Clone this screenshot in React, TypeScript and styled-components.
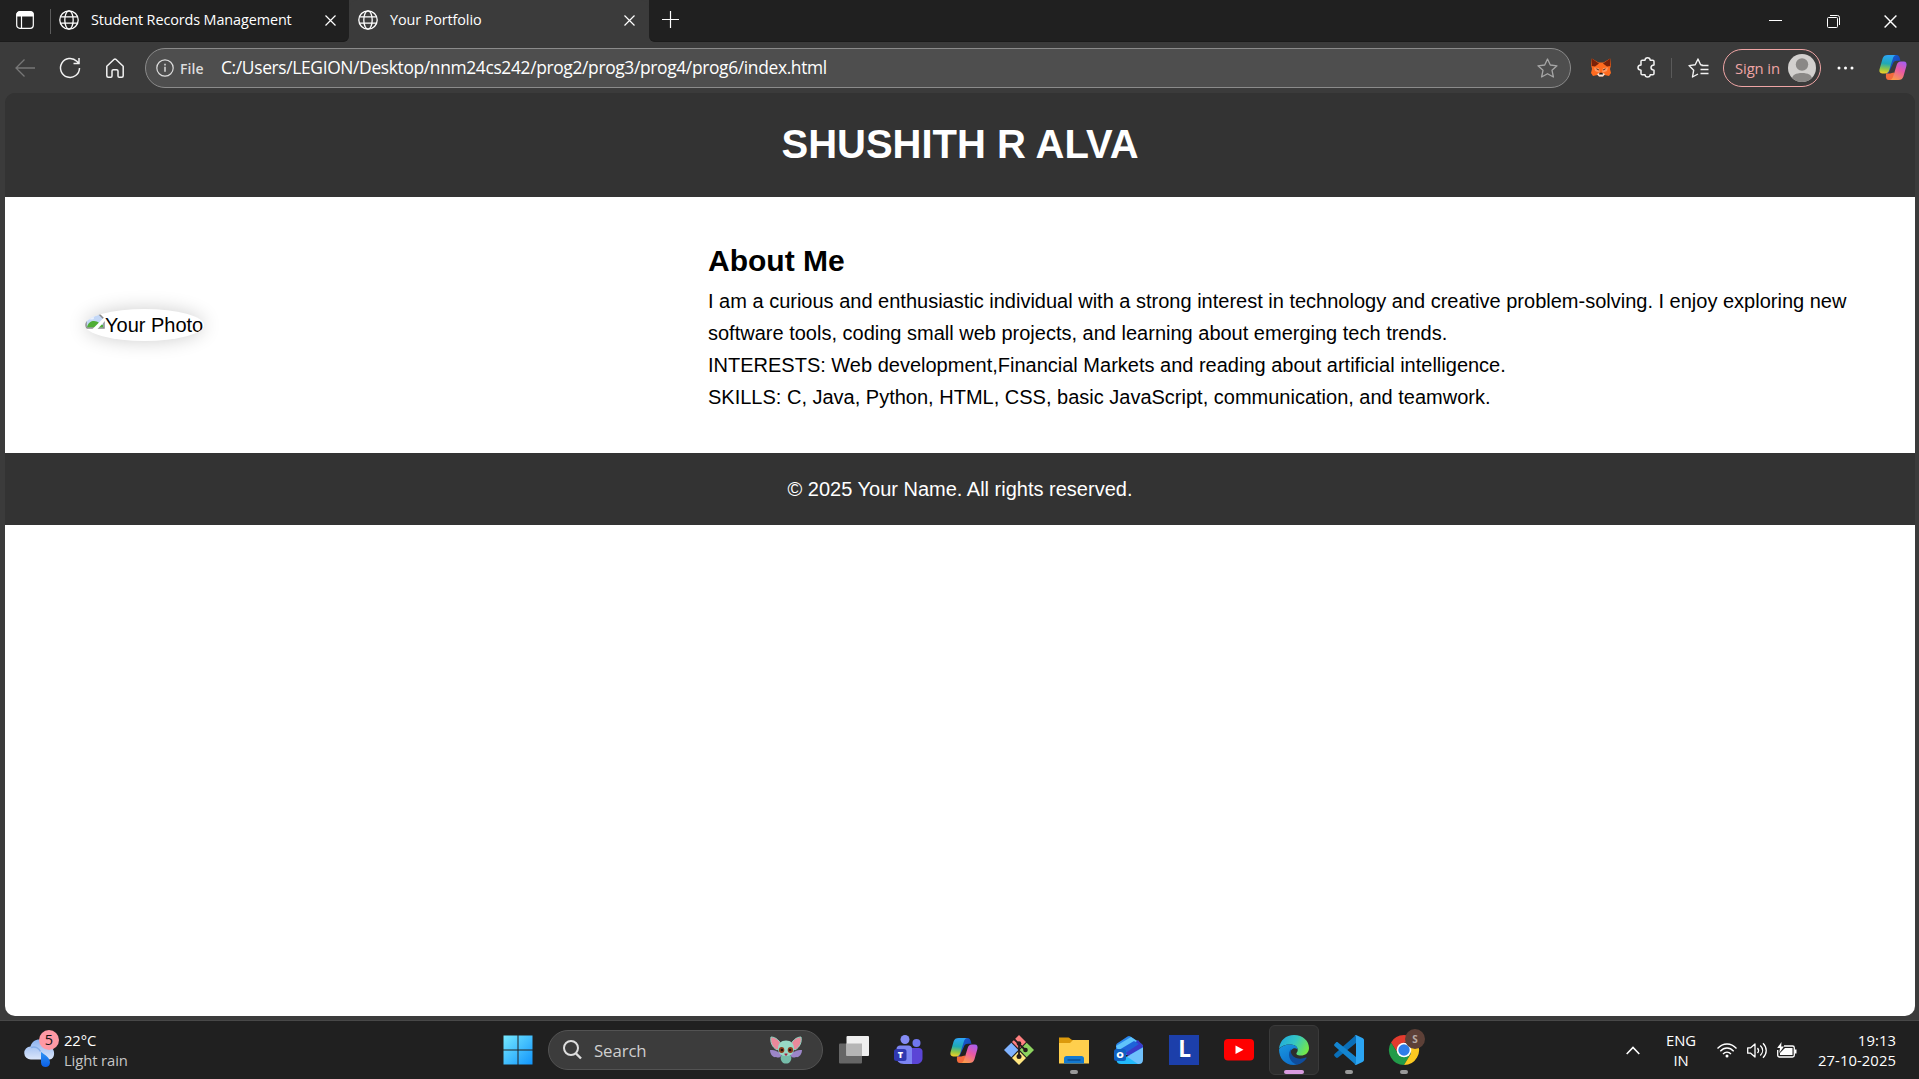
import React from "react";
import styled, { createGlobalStyle } from "styled-components";

const Global = createGlobalStyle`
  * { box-sizing: border-box; }
  html, body { margin: 0; padding: 0; overflow: hidden; background: #202020; }
  svg { display: block; flex: none; overflow: visible; }
`;

const ui = `"Segoe UI", "Open Sans", "Noto Sans", sans-serif`;
const arial = `Arial, "Liberation Sans", sans-serif`;

const Desktop = styled.div`
  width: 1919px;
  height: 1079px;
  display: flex;
  flex-direction: column;
  font-family: ${ui};
  color: #fff;
`;

const Browser = styled.div`
  height: 1021px;
  display: flex;
  flex-direction: column;
  background: #3b3b3b;
  border-bottom: 1px solid #484848;
`;

const TabStrip = styled.div`
  height: 42px;
  flex: none;
  display: flex;
  background: #3b3b3b;
`;

const StripSection = styled.div<{ $w?: number; $side: "left" | "right" }>`
  ${(p) => (p.$w ? `width: ${p.$w}px;` : "flex: 1;")}
  display: flex;
  align-items: flex-start;
  background: #202020;
  border-bottom: 1px solid #1b1b1b;
  border-radius: ${(p) => (p.$side === "left" ? "0 0 6px 0" : "0 0 0 6px")};
`;

const Cell = styled.div<{ $w: number; $h?: number; $ml?: number }>`
  width: ${(p) => p.$w}px;
  height: ${(p) => (p.$h ? `${p.$h}px` : "100%")};
  margin-left: ${(p) => p.$ml ?? 0}px;
  flex: none;
  display: flex;
  align-items: center;
  justify-content: center;
`;

const StripRule = styled.div`
  width: 1px;
  height: 25px;
  margin-top: 9px;
  background: #5c5c5c;
`;

const ActiveTab = styled.div`
  width: 300px;
  height: 42px;
  display: flex;
  background: #3b3b3b;
  border-radius: 8px 8px 0 0;
`;

const TabTitle = styled.div<{ $w: number; $ml: number }>`
  width: ${(p) => p.$w}px;
  margin-left: ${(p) => p.$ml}px;
  height: 40px;
  line-height: 39px;
  font-size: 14.4px;
  letter-spacing: -0.1px;
  white-space: nowrap;
`;

const Spacer = styled.div`
  flex: 1;
`;

const Toolbar = styled.div`
  height: 51px;
  flex: none;
  display: flex;
  align-items: center;
  padding: 0 3px 0 2px;
`;

const AddressBar = styled.div`
  flex: 1;
  height: 40px;
  margin-left: 8px;
  margin-top: 1px;
  display: flex;
  align-items: center;
  border: 1px solid #8b8b8b;
  border-radius: 20px;
  background: #4e4e4e;
`;

const Scheme = styled.div`
  width: 41px;
  margin-left: -4px;
  font-size: 14px;
  font-weight: 600;
  letter-spacing: 0.1px;
  color: #dcdcdc;
`;

const Url = styled.div`
  flex: 1;
  font-size: 17.4px;
  letter-spacing: -0.345px;
  line-height: 36px;
  padding-bottom: 2px;
  white-space: nowrap;
`;

const ToolRule = styled.div`
  width: 1px;
  height: 20px;
  background: #5a5a5a;
`;

const SignIn = styled.div`
  width: 98px;
  height: 38px;
  margin-left: 7px;
  display: flex;
  align-items: center;
  justify-content: space-between;
  padding: 0 4px 0 11px;
  border: 1px solid #efa5a5;
  border-radius: 19px;
  color: #efa5a5;
  font-size: 14.8px;
  letter-spacing: -0.1px;
  white-space: nowrap;
`;

const Viewport = styled.main`
  height: 923px;
  margin: 0 4px 0 5px;
  background: linear-gradient(#333 100px, #fff 100px);
  border-radius: 10px;
  overflow: hidden;
  font-family: ${arial};
  font-size: 20px;
  line-height: 32px;
  color: #000;
`;

const Header = styled.header`
  height: 104px;
  padding: 20px;
  background: #333;
  color: #fff;
  text-align: center;
`;

const Name = styled.h1`
  margin: 0;
  font-size: 40px;
  line-height: 63px;
`;

const About = styled.section`
  height: 256px;
  padding: 40px 60px 40px 80px;
  display: flex;
  align-items: center;
`;

const PhotoColumn = styled.div`
  width: 623px;
  flex: none;
`;

const Photo = styled.div`
  width: 119px;
  height: 32px;
  display: flex;
  align-items: flex-start;
  overflow: hidden;
  border-radius: 50%;
  box-shadow: 0 0 19px rgba(0, 0, 0, 0.2);
  white-space: nowrap;
`;

const Bio = styled.div`
  white-space: nowrap;
`;

const BioTitle = styled.h2`
  margin: 0;
  font-size: 30px;
  line-height: 48px;
`;

const Line = styled.p`
  margin: 0;
`;

const Footer = styled.footer`
  height: 72px;
  padding: 20px;
  background: #333;
  color: #fff;
  text-align: center;
`;

const Taskbar = styled.div`
  height: 58px;
  display: flex;
  align-items: center;
  background: #202020;
`;

const Weather = styled.div`
  width: 494px;
  height: 58px;
  padding-left: 24px;
  padding-bottom: 3px;
  display: flex;
  align-items: center;
`;

const Stack = styled.div<{ $align: string; $w?: number; $ls?: number }>`
  ${(p) => (p.$w ? `width: ${p.$w}px;` : "")}
  display: flex;
  flex-direction: column;
  text-align: ${(p) => p.$align};
  font-size: 14.8px;
  line-height: 20px;
  letter-spacing: ${(p) => p.$ls ?? -0.1}px;
  white-space: nowrap;
`;

const WeatherText = styled(Stack)`
  margin-left: 4px;
  margin-top: 3px;
`;

const Dim = styled.span`
  color: #c6c6c6;
`;

const Search = styled.div`
  width: 275px;
  height: 40px;
  margin: 0 3px 0 6px;
  padding: 0 19px 0 14px;
  display: flex;
  align-items: center;
  border: 1px solid #535353;
  border-radius: 20px;
  background: #3c3c3c;
  color: #cfcfcf;
  font-size: 16.8px;
`;

const SearchLabel = styled.span`
  flex: 1;
  margin-left: 12px;
  letter-spacing: -0.1px;
`;

const AppSlot = styled.div<{ $active?: boolean }>`
  width: 50px;
  height: 50px;
  margin: 0 2.5px;
  flex: none;
  display: flex;
  flex-direction: column;
  align-items: center;
  padding-top: 9px;
  border-radius: 6px;
  border: 1px solid ${(p) => (p.$active ? "#3a3a3a" : "transparent")};
  background: ${(p) => (p.$active ? "#2d2d2d" : "transparent")};
`;

const Indicator = styled.div<{ $active?: boolean }>`
  width: ${(p) => (p.$active ? 20 : 8)}px;
  height: 4px;
  margin-top: 5px;
  border-radius: 2px;
  background: ${(p) => (p.$active ? "#d99be0" : "#999")};
`;

const Tray = styled.div`
  display: flex;
  align-items: center;
  height: 58px;
  padding-right: 23px;
`;

const Globe = () => (
  <svg width="20" height="20" viewBox="0 0 20 20" fill="none" stroke="#fff" strokeWidth="1.3">
    <circle cx="10" cy="10" r="9.2" />
    <ellipse cx="10" cy="10" rx="4.2" ry="9.2" />
    <path d="M1.5 6.8h17M1.5 13.2h17" />
  </svg>
);

const Close = ({ s = 11 }: { s?: number }) => (
  <svg width={s} height={s} viewBox="0 0 11 11" stroke="#fff" strokeWidth="1.2">
    <path d="M.5.5l10 10M10.5.5l-10 10" />
  </svg>
);

const Copilot = ({ id }: { id: string }) => (
  <svg width="28" height="27" viewBox="0 0 28 27">
    <defs>
      <linearGradient id={id + "a"} x1="0.3" y1="0" x2="0.2" y2="1">
        <stop offset="0" stopColor="#2da5f5" />
        <stop offset=".45" stopColor="#1fa9b5" />
        <stop offset=".75" stopColor="#8fc646" />
        <stop offset="1" stopColor="#f5cf27" />
      </linearGradient>
      <linearGradient id={id + "b"} x1="0.8" y1="0" x2="0.3" y2="1">
        <stop offset="0" stopColor="#a75ef0" />
        <stop offset=".45" stopColor="#e858a6" />
        <stop offset="1" stopColor="#fb9a4b" />
      </linearGradient>
      <linearGradient id={id + "c"} x1="0" y1="0" x2="1" y2="1">
        <stop offset="0" stopColor="#1268d8" />
        <stop offset="1" stopColor="#1c35ad" />
      </linearGradient>
    </defs>
    <path d="M9 1h8.5c2 0 2.7 1.4 3.2 3l.8 2.7H18c-2.4 0-3.5 1-4.2 3.3L9 20c-2.2 0-2.8-1.800-3.200-3.500z" fill={`url(#${id}c)`} />
    <path d="M7 19.4h4.1l3.700-1 2.300 7.600H10c-2.4 0-2.6-1.1-3.1-3z" fill="#f36b3c" />
    <path d="M8.8 1H17c-2 .4-2.7 2-3.3 4l-3.4 11c-.7 2.2-1.8 3.4-4.2 3.4H3.3C.7 19.400 0 17.300.6 15l3-10.500C4.400 2 6 1 8.800 1z" fill={`url(#${id}a)`} />
    <path d="M19.200 26H11c2-.4 2.700-2 3.300-4l3.400-11c.7-2.200 1.800-3.400 4.200-3.400h2.800c2.600 0 3.300 2.100 2.700 4.400l-3 10.500c-.8 2.500-2.400 3.500-5.200 3.500z" fill={`url(#${id}b)`} />
  </svg>
);

const Fox = () => (
  <svg width="20" height="19" viewBox="0 0 20 19">
    <path d="M.8.500 7.500 4.500h5L19.200.500 20 7l-1 4 1 4-2 3-4.500-1-1.500 1.500H8L6.500 17 2 18l-2-3 1-4-1-4z" fill="#ff6b1f" />
    <path d="M.8.500 8 5.500 4 8.500.6 8zM19.200.500 12 5.500l4 3 3.400-.5z" fill="#7a2109" />
    <path d="M3 9.500 8 10l1 5-5-2zM17 9.500 12 10l-1 5 5-2z" fill="#ff9760" />
    <path d="M4.500 10.500 7.500 11l.3 1.500zM15.500 10.500 12.500 11l-.3 1.500z" fill="#35201a" />
    <path d="M6 16l2.500-1h3l2.500 1-2 2.500H8z" fill="#f3e6dd" />
    <path d="M8.500 14.800h3l.5 1.700H8z" fill="#2c1c18" />
  </svg>
);

const Avatar = () => (
  <svg width="28" height="28" viewBox="0 0 28 28">
    <defs>
      <clipPath id="av">
        <circle cx="14" cy="14" r="14" />
      </clipPath>
    </defs>
    <g clipPath="url(#av)">
      <path d="M0 0h28v28H0z" fill="#d2d0ce" />
      <circle cx="14" cy="10.500" r="6.200" fill="#8a8886" />
      <path d="M4 25c0-4 4-6 10-6s10 2 10 6l-3 4H7z" fill="#8a8886" />
    </g>
  </svg>
);

const BrokenImage = () => (
  <svg width="20" height="24" viewBox="0 0 20 24">
    <path d="M1 5h13l5 5v9H1z" fill="#c3d7f6" stroke="#8b8b8b" strokeWidth="1.500" />
    <path d="M2 18.300c1-4.500 4-6.300 7-6.300 4 0 6 3 9 4v2.300z" fill="#4fae36" />
    <ellipse cx="6" cy="9" rx="3" ry="1.500" fill="#e9f1fd" />
    <path d="M20.500 7v4.500L12 20.500H7z" fill="#fff" />
  </svg>
);

const WeatherIcon = () => (
  <svg width="36" height="40" viewBox="0 0 36 40">
    <defs>
      <linearGradient id="cl" x1="0" y1="0" x2="0" y2="1">
        <stop offset="0" stopColor="#8bb2f0" />
        <stop offset="1" stopColor="#dbe6fa" />
      </linearGradient>
      <linearGradient id="drop" x1="0" y1="0" x2="0" y2="1">
        <stop offset="0" stopColor="#2e94f4" />
        <stop offset="1" stopColor="#0b5fe8" />
      </linearGradient>
    </defs>
    <path d="M7 30.500a6.500 6.500 0 0 1-.5-13C8 12 13 9.500 18 11c5 0 7.500 3 8.500 7.500 5 1 5 12-1 12z" fill="url(#cl)" />
    <path d="M7 18.500c4-1.500 8 .500 9.500 4" stroke="#86aeea" strokeWidth="1.500" fill="none" />
    <path d="M17 23c4 3 9 5.500 9 10.500 0 6-9 6-9 0z" fill="url(#drop)" />
    <circle cx="25" cy="11" r="10" fill="#ff99a4" />
    <text x="25" y="16.200" textAnchor="middle" fontFamily="Open Sans" fontSize="14.500" fill="#111">5</text>
  </svg>
);

const Start = () => (
  <svg width="30" height="30" viewBox="0 0 30 30">
    <defs>
      <linearGradient id="win" gradientUnits="userSpaceOnUse" x1="0" y1="0" x2="30" y2="30">
        <stop offset="0" stopColor="#77eaff" />
        <stop offset="1" stopColor="#0f93fb" />
      </linearGradient>
    </defs>
    <path d="M.500.500h14v14H.500zM15.500.500h14v14h-14zM.500 15.500h14v14H.500zM15.500 15.500h14v14h-14z" fill="url(#win)" />
  </svg>
);

const Bat = () => (
  <svg width="34" height="28" viewBox="0 0 34 28">
    <path d="M1 14c6 0 9 2 12 5-2 3-4 3-6 2-3 1-6-3-6-7zM33 14c-6 0-9 2-12 5 2 3 4 3 6 2 3 1 6-3 6-7z" fill="#9c86c8" />
    <path d="M2 1c5 0 9 4 11 9l-5 4C3 11 1 6 2 1zM32 1c-5 0-9 4-11 9l5 4c5-3 7-8 6-13z" fill="#e9899b" stroke="#8fd3c0" strokeWidth="1" />
    <path d="M17 18c5 0 6 3 5 6s-3 3.500-5 3.500-4-.500-5-3.500 0-6 5-6z" fill="#76bca9" />
    <path d="M17 4.500c5 0 8 3 8 8 0 5-3 7.500-8 7.500s-8-2.500-8-7.500c0-5 3-8 8-8z" fill="#98d9c5" />
    <ellipse cx="12.600" cy="14" rx="2.700" ry="3" fill="#8c3d1d" />
    <ellipse cx="21.400" cy="14" rx="2.700" ry="3" fill="#8c3d1d" />
    <circle cx="13" cy="14" r="1.300" fill="#23110c" />
    <circle cx="21" cy="14" r="1.300" fill="#23110c" />
    <path d="M15.500 17.500h3c0 3-3 3-3 0z" fill="#a8243e" />
  </svg>
);

const TaskView = () => (
  <svg width="30" height="30" viewBox="0 0 30 30">
    <rect y="8.500" width="23" height="20" rx="1" fill="#666" />
    <rect x="7.500" y="1" width="22.500" height="20" rx="1" fill="#efefef" />
    <path d="M7.500 8.500H23V21H7.500z" fill="#b5b5b5" />
  </svg>
);

const Teams = () => (
  <svg width="30" height="30" viewBox="1 0 30 30">
    <circle cx="12" cy="4.500" r="4.500" fill="#858cf5" />
    <circle cx="23.500" cy="8" r="4" fill="#7077ee" />
    <path d="M18 13h8c2 0 3.500 1.500 3.500 3.500V23c0 4-3 6-6.500 6h-5z" fill="#5b45d6" />
    <path d="M7 10.500h8.500c2 0 3.500 1.500 3.500 3.500v15h-8c-5 0-7.500-3-7.500-7v-8c0-2 1.500-3.500 3.500-3.500z" fill="#7c84f2" />
    <rect x="1" y="14" width="12.500" height="12" rx="2.500" fill="#3038b0" />
    <text x="7.300" y="23.200" textAnchor="middle" fontFamily="Open Sans" fontSize="9" fontWeight="800" fill="#fff">T</text>
  </svg>
);

const Git = () => (
  <svg width="30" height="30" viewBox="0 0 30 30">
    <path d="M15 0l7 7-7 7-7-7z" fill="#ff8080" />
    <path d="M7.300 7.700l7 7.300-7 7.300L0 15z" fill="#80b3ff" />
    <path d="M22.700 7.700L30 15l-7.300 7.300L15.700 15z" fill="#8dd35f" />
    <path d="M15 16l7 7-7 7-7-7z" fill="#ffe680" />
    <path d="M10 4l5 5v13M15 9l6.500 6" stroke="#241c1c" strokeWidth="1.800" fill="none" />
    <circle cx="15" cy="8.500" r="2.300" fill="#241c1c" />
    <circle cx="21.500" cy="15" r="2.300" fill="#241c1c" />
    <circle cx="15" cy="21.500" r="2.500" fill="#241c1c" />
  </svg>
);

const Files = () => (
  <svg width="30" height="30" viewBox="0 0 30 30">
    <path d="M0 2.500h9.500c1.500 0 2 2.500 4 2.500H20v6H0z" fill="#dc9a0c" />
    <path d="M0 8h11l3-3h16v23.500H0z" fill="#ffcf4d" />
    <path d="M5 28.500v-5c0-1.500 1-2.500 2.500-2.500h15c1.500 0 2.500 1 2.500 2.500v5z" fill="#1379d0" />
    <path d="M8.500 25h13" stroke="#0a4d91" strokeWidth="1.400" />
  </svg>
);

const Outlook = () => (
  <svg width="30" height="30" viewBox="0 0 30 30">
    <path d="M3 8.500 13.500 1.500c1-.700 2-.700 3 0L27 8.500c1.500 1 2 2 2 3.500v8H2v-8c0-1.500 0-2.500 1-3.500z" fill="#2a86ec" />
    <path d="M9 14.500 24 5l3 3.500c1.500 1 2 2 2 3.500L14 21z" fill="#3a3ac8" />
    <path d="M2 11 17 2l6 4L5 17z" fill="#5fc4fb" />
    <path d="M29 12.500v12c0 3-1.500 4.500-4 4.500H10l-3-4z" fill="#6fc0fb" />
    <path d="M5 15 20 6l5 3-15 10z" fill="#1d62d8" />
    <path d="M3 17l12 6 9 6H7c-3 0-4.500-1.500-4.500-4.500z" fill="#22b9fa" />
    <rect y="14" width="12" height="12" rx="2.500" fill="#1060c0" />
    <text x="6" y="23.400" textAnchor="middle" fontFamily="Open Sans" fontSize="9.500" fontWeight="800" fill="#fff">O</text>
  </svg>
);

const LTile = styled.div`
  width: 30px;
  height: 30px;
  padding-left: 2px;
  background: linear-gradient(100deg, #1c3faa 30%, #173650 34%, #1c3faa 52%) 8px 8px / 14px 15px no-repeat, #1c3faa;
  color: #fff;
  font-size: 22.5px;
  font-weight: 700;
  line-height: 28px;
  text-align: center;
`;

const YouTube = () => (
  <svg width="30" height="30" viewBox="0 0 30 30">
    <rect y="4" width="30" height="21.500" rx="4" fill="#f00" />
    <path d="M11.500 10.500v8.500l8-4.200z" fill="#fff" />
  </svg>
);

const Edge = () => (
  <svg width="30" height="30" viewBox="0 0 30 30">
    <defs>
      <linearGradient id="eg" x1="0" y1="0.200" x2="1" y2="0.600">
        <stop offset="0" stopColor="#1fa9df" />
        <stop offset=".5" stopColor="#35c6c3" />
        <stop offset="1" stopColor="#74e848" />
      </linearGradient>
      <linearGradient id="eb" x1="0" y1="0" x2="0.600" y2="1">
        <stop offset="0" stopColor="#1997e0" />
        <stop offset="1" stopColor="#0e6fcb" />
      </linearGradient>
    </defs>
    <path d="M0 14C1 5 7 0 15 0c9 0 15 6 15 13 0 5-4 7.500-8 7.500s-5-1.500-4.500-2.500c3-3 .500-8-5-8.500C7 9 2 11 0 14z" fill="url(#eg)" />
    <path d="M12.500 9.500c4 .300 6.500 3 6 5-3-3-8 0-7 5 1 5 6 8 11 7-2 2-5 3.500-8 3.500C6 30 0 23 0 14.500 2.500 10.500 8 9 12.500 9.500z" fill="url(#eb)" />
    <path d="M12.500 13.500c-5 5-2 14 5.500 16.200 4-.700 7-3 9.500-6.500.400-.700-.200-1-.800-.700-6 2.700-13.500.500-14.700-5-.300-1.500-.200-3 .500-4z" fill="#0f4c9b" />
  </svg>
);

const VSCode = () => (
  <svg width="30" height="30" viewBox="0 0 30 30">
    <path d="M22 0v8L4 22.500c-.700.600-1.500.500-2 0L.500 21c-.500-.600-.500-1.400 0-2z" fill="#0a6fb8" />
    <path d="M22 30v-8L4 7.500c-.700-.600-1.500-.500-2 0L.500 9c-.500.600-.500 1.400 0 2z" fill="#1485d0" />
    <path d="M22 0l6.500 3c1 .500 1.500 1.300 1.500 2.300v19.400c0 1-.500 1.800-1.500 2.300L22 30c-.900 0-1.500-.300-2-.8 1 .6 2 .2 2-1.200V2c0-1.400-1-1.800-2-1.200.500-.5 1.100-.8 2-.8z" fill="#2ba5f3" />
  </svg>
);

const Chrome = () => (
  <svg width="36" height="36" viewBox="0 0 36 36">
    <path d="M2 13.500a15 15 0 0 1 26 0H15l-6 11z" fill="#e33b2e" />
    <path d="M2 13.500a15 15 0 0 0 13 22.500l7-11.500H9z" fill="#229b49" />
    <path d="M28 13.500a15 15 0 0 1-13 22.500L22 24.500v-11z" fill="#fcc921" />
    <circle cx="15" cy="21" r="7.300" fill="#fff" />
    <circle cx="15" cy="21" r="5.700" fill="#2f7de9" />
    <circle cx="26" cy="10" r="10" fill="#5d4037" />
    <text x="26" y="13.700" textAnchor="middle" fontFamily="Open Sans" fontSize="10" fontWeight="700" fill="#b5aaa6">S</text>
  </svg>
);

const ChromeFrame = styled.div`
  width: 30px;
  height: 30px;
  display: flex;
  align-items: flex-end;
`;

const apps = [
  { key: "view", icon: <TaskView /> },
  { key: "teams", icon: <Teams /> },
  { key: "copilot", icon: <Cell $w={30} $h={30}><Copilot id="tb" /></Cell> },
  { key: "git", icon: <Git /> },
  { key: "files", icon: <Files />, open: true },
  { key: "outlook", icon: <Outlook /> },
  { key: "l", icon: <LTile>L</LTile> },
  { key: "youtube", icon: <YouTube /> },
  { key: "edge", icon: <Edge />, open: true, active: true },
  { key: "code", icon: <VSCode />, open: true },
  { key: "chrome", icon: <ChromeFrame><Chrome /></ChromeFrame>, open: true },
];

export default function App() {
  return (
    <Desktop>
      <Global />
      <Browser>
        <TabStrip>
          <StripSection $w={349} $side="left">
            <Cell $w={50} $h={40}>
              <svg width="18" height="18" viewBox="0 0 18 18" fill="none" stroke="#fff" strokeWidth="1.200">
                <rect x=".7" y=".7" width="16.600" height="16.600" rx="3" />
                <path d="M1 3.500C1 2 2 1 3.500 1h11C16 1 17 2 17 3.500V5H1z" fill="#fff" />
                <path d="M5.500 5v12" />
              </svg>
            </Cell>
            <StripRule />
            <Cell $w={36} $h={40}><Globe /></Cell>
            <TabTitle $w={225} $ml={4}>Student Records Management</TabTitle>
            <Cell $w={28} $h={41}><Close /></Cell>
          </StripSection>
          <ActiveTab>
            <Cell $w={38} $h={40}><Globe /></Cell>
            <TabTitle $w={228} $ml={3}>Your Portfolio</TabTitle>
            <Cell $w={22} $h={41}><Close /></Cell>
          </ActiveTab>
          <StripSection $side="right">
            <Cell $w={43} $h={39}>
              <svg width="17" height="17" viewBox="0 0 17 17" stroke="#fff" strokeWidth="1.200">
                <path d="M8.500 0v17M0 8.500h17" />
              </svg>
            </Cell>
            <Spacer />
            <Cell $w={58} $h={41}>
              <svg width="13" height="1" viewBox="0 0 13 1"><path d="M0 0h13v1H0z" fill="#fff" /></svg>
            </Cell>
            <Cell $w={58} $h={43}>
              <svg width="13" height="13" viewBox="0 0 13 13" fill="none" stroke="#fff">
                <rect x=".5" y="2.500" width="10" height="10" rx="1" />
                <path d="M3 .500h7.500a2 2 0 0 1 2 2V10" />
              </svg>
            </Cell>
            <Cell $w={57} $h={43}><Close s={13} /></Cell>
          </StripSection>
        </TabStrip>
        <Toolbar>
          <Cell $w={45}>
            <svg width="20" height="18" viewBox="0 0 20 18" fill="none" stroke="#777" strokeWidth="1.300">
              <path d="M20 9H1M9.500.500 1 9l8.500 8.500" />
            </svg>
          </Cell>
          <Cell $w={45}>
            <svg width="22" height="22" viewBox="0 0 22 22" fill="none" stroke="#f2f2f2" strokeWidth="1.500">
              <path d="M20.500 11A9.500 9.500 0 1 1 17.800 4.300L19.500 6M20 1v5.500h-5.500" />
            </svg>
          </Cell>
          <Cell $w={45}>
            <svg width="18" height="20" viewBox="0 0 18 20" fill="none" stroke="#f2f2f2" strokeWidth="1.500" strokeLinejoin="round">
              <path d="M.800 8.200 8.200 1.300c.500-.400 1.100-.400 1.600 0l7.400 6.900v9.500c0 .8-.6 1.500-1.500 1.500h-2.500c-.8 0-1.200-.6-1.200-1.300V13c0-.8-.6-1.300-1.400-1.300H7.400c-.8 0-1.400.5-1.400 1.300v4.900c0 .7-.4 1.300-1.200 1.300H2.300c-.9 0-1.500-.7-1.500-1.500z" />
            </svg>
          </Cell>
          <AddressBar>
            <Cell $w={38}>
              <svg width="18" height="18" viewBox="0 0 18 18" fill="none" stroke="#dcdcdc" strokeWidth="1.200">
                <circle cx="9" cy="9" r="8.200" />
                <path d="M9 7.800v5M9 4.800v1.600" strokeWidth="1.500" />
              </svg>
            </Cell>
            <Scheme>File</Scheme>
            <Url>C:/Users/LEGION/Desktop/nnm24cs242/prog2/prog3/prog4/prog6/index.html</Url>
            <Cell $w={45}>
              <svg width="21" height="20" viewBox="0 0 21 20" fill="none" stroke="#a6a6a6" strokeWidth="1.300" strokeLinejoin="round">
                <path d="M10.500 1l2.800 6 6.700.8-5 4.500 1.400 6.700-5.900-3.300L4.600 19 6 12.300 1 7.800 7.700 7z" />
              </svg>
            </Cell>
          </AddressBar>
          <Cell $w={60}><Fox /></Cell>
          <Cell $w={31}>
            <svg width="20" height="21" viewBox="0 0 20 21" fill="none" stroke="#f2f2f2" strokeWidth="1.500" strokeLinejoin="round">
              <path d="M4 4.500c0-.8.500-1.300 1.300-1.300H8c.2-3.300 5-3.300 5.200 0h2.500c.8 0 1.300.5 1.300 1.300V8c-4 .2-4 5 0 5.200v3.300c0 .8-.5 1.300-1.300 1.300h-2.500c-.2 3-5 3-5.200 0H5.300c-.8 0-1.300-.5-1.300-1.300v-3.300C0 13 0 8.200 4 8z" />
            </svg>
          </Cell>
          <Cell $w={18}><ToolRule /></Cell>
          <Cell $w={36}>
            <svg width="21" height="20" viewBox="0 0 21 20" fill="none" stroke="#f2f2f2" strokeWidth="1.400" strokeLinejoin="round">
              <path d="M14.500 7l-1.900-.300L10 1 7.200 6.800 1 7.600l4.700 4.600L4.500 19l5.500-3" />
              <path d="M13.500 7.500H20.500M12.500 11.500h8M12.500 15.500h8" />
            </svg>
          </Cell>
          <SignIn>Sign in<Avatar /></SignIn>
          <Cell $w={48}>
            <svg width="17" height="4" viewBox="0 0 17 4" fill="#fff">
              <circle cx="2" cy="2" r="1.500" /><circle cx="8.500" cy="2" r="1.500" /><circle cx="15" cy="2" r="1.500" />
            </svg>
          </Cell>
          <Cell $w={47}><Copilot id="cp" /></Cell>
        </Toolbar>
        <Viewport>
          <Header><Name>SHUSHITH R ALVA</Name></Header>
          <About>
            <PhotoColumn>
              <Photo><BrokenImage />Your Photo</Photo>
            </PhotoColumn>
            <Bio>
              <BioTitle>About Me</BioTitle>
              <Line>I am a curious and enthusiastic individual with a strong interest in technology and creative problem-solving. I enjoy exploring new</Line>
              <Line>software tools, coding small web projects, and learning about emerging tech trends.</Line>
              <Line>INTERESTS: Web development,Financial Markets and reading about artificial intelligence.</Line>
              <Line>SKILLS: C, Java, Python, HTML, CSS, basic JavaScript, communication, and teamwork.</Line>
            </Bio>
          </About>
          <Footer>© 2025 Your Name. All rights reserved.</Footer>
        </Viewport>
      </Browser>
      <Taskbar>
        <Weather>
          <WeatherIcon />
          <WeatherText $align="left"><span>22°C</span><Dim>Light rain</Dim></WeatherText>
        </Weather>
        <Cell $w={48}><Start /></Cell>
        <Search>
          <svg width="19" height="20" viewBox="0 0 19 20" fill="none" stroke="#dedede" strokeWidth="2">
            <circle cx="8" cy="8" r="7" />
            <path d="M13 13.500l5 5" strokeWidth="2.400" />
          </svg>
          <SearchLabel>Search</SearchLabel>
          <Bat />
        </Search>
        {apps.map((a) => (
          <AppSlot key={a.key} $active={a.active}>
            {a.icon}
            {a.open && <Indicator $active={a.active} />}
          </AppSlot>
        ))}
        <Spacer />
        <Tray>
          <Cell $w={47}>
            <svg width="14" height="9" viewBox="0 0 14 9" fill="none" stroke="#fff" strokeWidth="1.600"><path d="M.700 8 7 1.500 13.300 8" /></svg>
          </Cell>
          <Cell $w={50}><Stack $align="center"><span>ENG</span><span>IN</span></Stack></Cell>
          <Cell $w={22} $ml={10}>
            <svg width="20" height="15" viewBox="0 0 20 15" fill="none" stroke="#fff" strokeWidth="1.300">
              <path d="M.500 5.500c5.500-6 13.500-6 19 0M3.300 8.200c4-4.300 9.400-4.300 13.400 0M6 11c2.300-2.600 5.700-2.600 8 0" />
              <circle cx="10" cy="13" r="1.500" fill="#fff" stroke="none" />
            </svg>
          </Cell>
          <Cell $w={37}>
            <svg width="20" height="17" viewBox="0 0 20 17" fill="none" stroke="#fff" strokeWidth="1.300" strokeLinejoin="round">
              <path d="M.700 5.800h3L8 2v13l-4.300-3.800h-3zM10.500 6c1.300 1.500 1.300 3.500 0 5M13.300 3.500c3 3 3 7 0 10M16 1.200c4.300 4.300 4.300 10.300 0 14.600" />
            </svg>
          </Cell>
          <Cell $w={24}>
            <svg width="20" height="16" viewBox="0 0 20 16" fill="none" stroke="#fff" strokeWidth="1.300">
              <path d="M7 4h8.500c1 0 1.800.8 1.800 1.800v7.400c0 1-.8 1.800-1.800 1.800h-13c-1 0-1.800-.8-1.800-1.800V8" />
              <path d="M8 6h7.500v7H3v-2z" fill="#fff" stroke="none" />
              <path d="M18 7.500h1.500v4H18z" fill="#fff" stroke="none" />
              <path d="M4.500 0 .200 6H3l-.8 5L7 4.500H4.200z" fill="#fff" stroke="none" />
            </svg>
          </Cell>
          <Stack $align="right" $w={97} $ls={0.08}><span>19:13</span><span>27-10-2025</span></Stack>
        </Tray>
      </Taskbar>
    </Desktop>
  );
}
